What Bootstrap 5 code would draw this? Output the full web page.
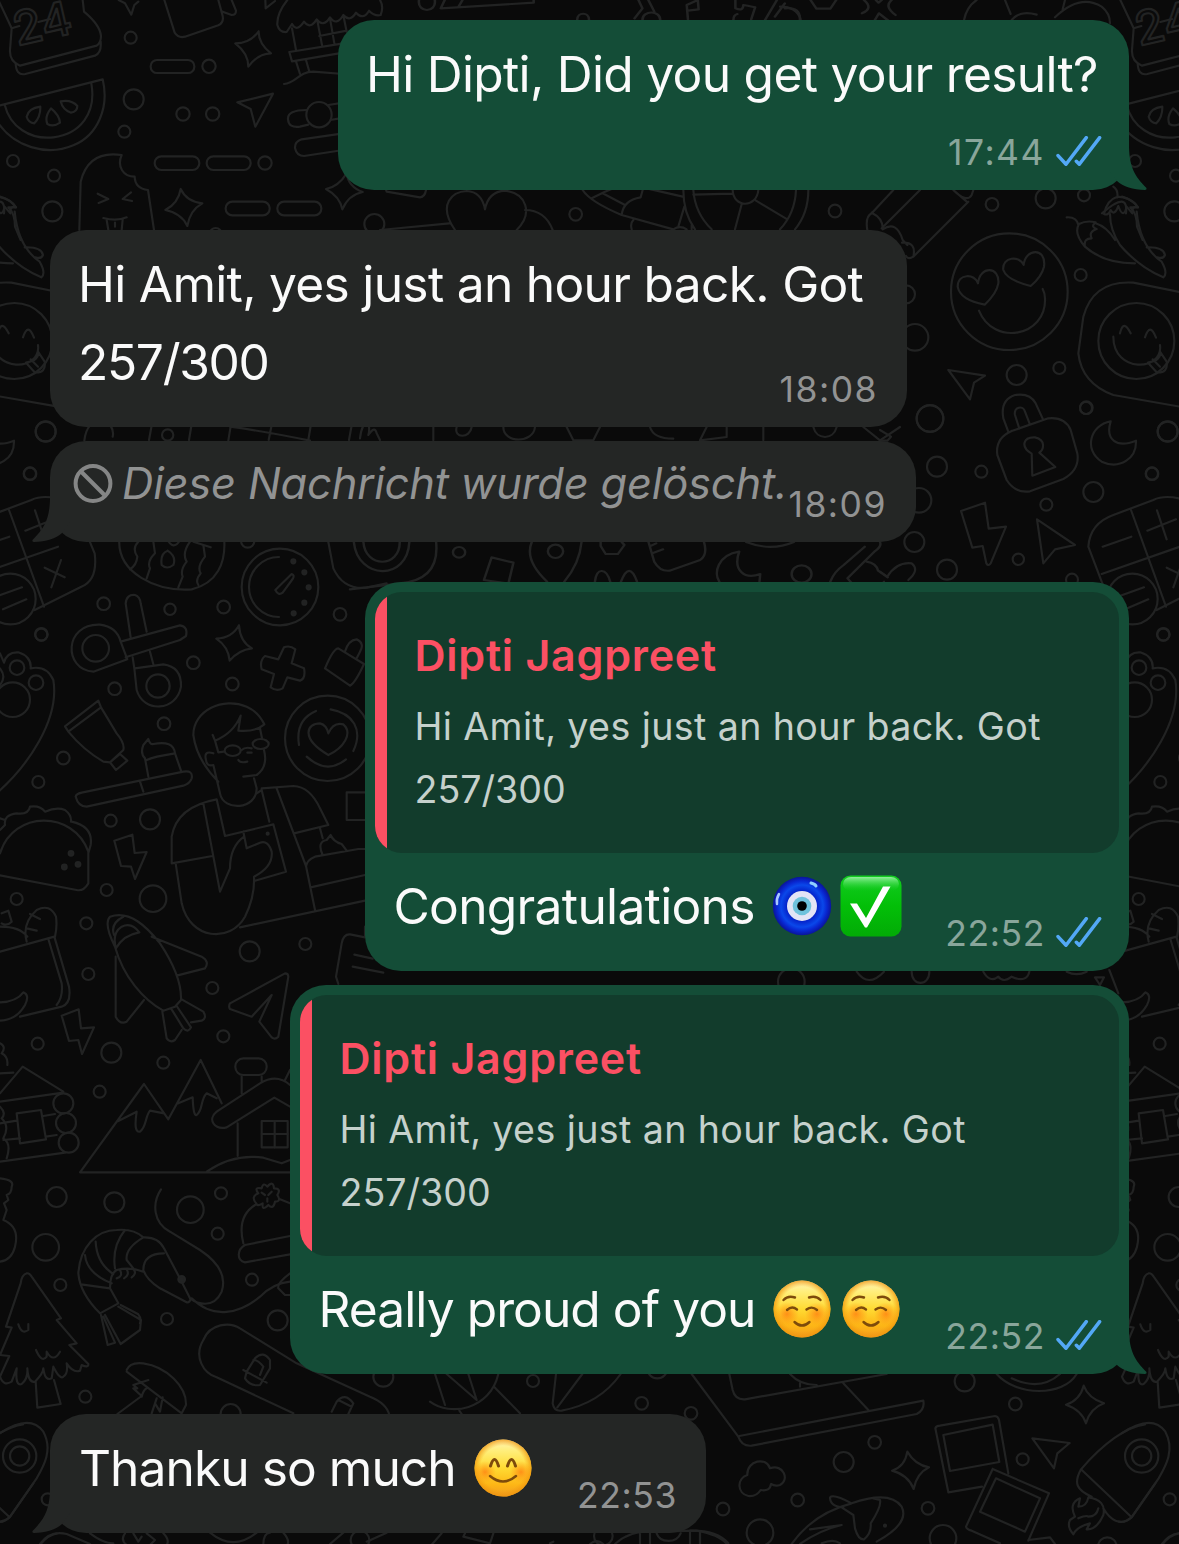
<!DOCTYPE html>
<html lang="de">
<head>
<meta charset="utf-8">
<meta name="viewport" content="width=device-width, initial-scale=1">
<title>Chat</title>
<link rel="stylesheet" href="https://cdn.jsdelivr.net/npm/bootstrap@5.3.0/dist/css/bootstrap.min.css">
<style>
body{background:#0a0a0a;font-family:Inter,"Liberation Sans",sans-serif;color:#fafafa;overflow:hidden}
.chat{width:1179px;height:1544px;padding:20px 50px 0}
.wallpaper{inset:0;width:1179px;height:1544px}
.wallpaper .ln{fill:none;stroke:#222323;stroke-width:6.5;stroke-linecap:round;stroke-linejoin:round}
.wallpaper .ln .solid{fill:#222323}
.wallpaper .ln .over{fill:#0a0a0a}
.bubble{border-radius:36px}
.bubble-out{background:#144d37}
.bubble-in{background:#242625}
.gap-lg{margin-top:40px}
.gap-sm{margin-top:14px}
.msg-text{font-size:49.7px;line-height:78px;letter-spacing:-.7px;white-space:nowrap}
.msg-text .snug{letter-spacing:-.95px}
.msg-text.figures{letter-spacing:-1.33px}
.msg-time{font-size:35.5px;line-height:36px;padding-top:2px;letter-spacing:.6px;white-space:nowrap;color:#929393}
.msg-time.airy{letter-spacing:1.5px}
.bubble-out .msg-time{color:#89a69b}
.ticks{width:46px;height:30.3px;margin:0 0 2px 11px}
.tail{width:40px;height:60px;bottom:0;right:-20px}
.tail-left{right:auto;left:-20px;transform:scaleX(-1)}
.deleted{font-size:43.5px;line-height:60px;letter-spacing:-.2px;font-style:italic;color:#929393;white-space:nowrap}
.deleted-label{margin-left:9px}
.ban{width:40px;height:40px}
.quoted{background:#123c2c;margin:10px 10px 0;height:261px;border-radius:27px;overflow:hidden}
.quoted-bar{width:12px;background:#fb5063}
.quoted-name{font-size:43px;line-height:56px;letter-spacing:.75px;font-weight:600;color:#fb5063;white-space:nowrap}
.quoted-text{font-size:37.6px;line-height:63px;margin-top:12px;letter-spacing:.4px;color:#c5d1cc;white-space:nowrap}
.quoted-text .figures{letter-spacing:0}
.quoted-body{padding:35px 0 0 27.5px}
.emoji{width:62px;height:62px}
.emoji-first{margin-left:16px}
.emoji-next{margin-left:7px}
.b1{width:791px;height:170px;padding:15px 27px 0 28px}
.b1 .time-row{margin-top:20px}
.b2{width:857px;height:197px;padding:15px 29px 0 28px}
.b2 .msg-time{margin-bottom:-7px}
.b3{width:866px;height:101px;padding:12px 29px 0 23px}
.b3 .msg-time{margin-bottom:-10px}
.b4{width:764px;height:389px}
.b5{width:839px;height:389px}
.reply-row{padding:14px 27px 0 28.5px}
.reply-row .time-row{margin-bottom:-7px}
.b6{width:656px;height:119px;padding:15px 29px 0 29px}
.b6 .msg-time{margin-bottom:-7px}
</style>
<script src="https://cdn.jsdelivr.net/npm/bootstrap@5.3.0/dist/js/bootstrap.bundle.min.js"></script>
</head>
<body>
<svg class="wallpaper position-absolute" viewBox="0 0 1179 1544" aria-hidden="true">
<defs>
<linearGradient id="faceG" x1="0" y1="0" x2="0" y2="1"><stop offset="0" stop-color="#fff3b8"/><stop offset=".2" stop-color="#ffee7a"/><stop offset=".5" stop-color="#ffdb33"/><stop offset=".8" stop-color="#fdb515"/><stop offset="1" stop-color="#f09c22"/></linearGradient>
<radialGradient id="rimG"><stop offset=".78" stop-color="#f59a10" stop-opacity="0"/><stop offset="1" stop-color="#ee930c" stop-opacity=".75"/></radialGradient>
<radialGradient id="cheekG"><stop offset="0" stop-color="#ff7a10" stop-opacity=".75"/><stop offset="1" stop-color="#ff8a10" stop-opacity="0"/></radialGradient>
<radialGradient id="blueG"><stop offset=".5" stop-color="#0420c8"/><stop offset=".72" stop-color="#0a48ea"/><stop offset=".86" stop-color="#0826d0"/><stop offset="1" stop-color="#0a149a"/></radialGradient>
<linearGradient id="okG" x1="0" y1="0" x2="0" y2="1"><stop offset="0" stop-color="#12cc20"/><stop offset=".5" stop-color="#03bf08"/><stop offset="1" stop-color="#02ab06"/></linearGradient>
<linearGradient id="okTop" x1="0" y1="0" x2="0" y2="1"><stop offset="0" stop-color="#8ff09a"/><stop offset="1" stop-color="#20d02c" stop-opacity="0"/></linearGradient>
<g id="doodles" class="ln">
<!-- top left: cake, melon, ice cream, sparkles, cafe -->
<g transform="scale(.33333)">
<path d="M-5 0L35 85L30 150Q28 185 60 197L290 137Q303 128 303 108Q300 75 252 35L248 0M47 190Q48 228 76 222L285 167Q305 158 302 125M35 85L58 78M115 66L150 57"/>
<text x="52" y="138" transform="rotate(-13 52 138)" font-family="Inter" font-weight="500" font-size="140">24</text>
<path d="M0 316L308 238C328 320 295 405 220 436C140 470 40 440 -8 365M14 314C30 380 90 420 160 412C240 402 290 340 274 250M121 320Q85 325 80 350Q85 368 103 370Q122 350 121 320M153 325Q133 350 142 372Q160 382 180 368Q178 345 153 325M182 304Q188 330 213 338Q232 335 232 318Q215 298 182 304"/>
<circle cx="392" cy="113" r="18"/><circle cx="627" cy="199" r="20"/><circle cx="401" cy="298" r="30"/><circle cx="549" cy="342" r="20"/><circle cx="638" cy="342" r="20"/><circle cx="373" cy="395" r="18"/><circle cx="39" cy="483" r="18"/><circle cx="162" cy="527" r="18"/><circle cx="157" cy="634" r="30"/><circle cx="795" cy="489" r="20"/><circle cx="1123" cy="672" r="30"/><circle cx="647" cy="702" r="18"/>
<rect x="452" y="180" width="131" height="39" rx="19"/><rect x="464" y="469" width="134" height="41" rx="20"/><rect x="620" y="469" width="132" height="41" rx="20"/><rect x="677" y="605" width="132" height="41" rx="20"/><rect x="832" y="605" width="132" height="41" rx="20"/>
<path d="M356 0L375 10L394 44L403 15L415 5M493 0L524 98Q535 115 555 110L655 76Q672 68 668 48L655 0M668 35L695 45Q708 45 708 32L695 0M796 0L797 25L825 3M862 0Q830 40 832 75Q838 98 860 96L876 72Q890 98 912 65Q930 90 950 58Q970 84 990 52Q1010 80 1030 45Q1050 68 1068 38Q1090 62 1107 32Q1125 50 1142 45Q1152 20 1140 0M876 85L888 150M952 62L966 135M990 55L1003 130M1030 45L1040 95M958 108L1040 92M868 156L1030 130M868 156L876 184L1030 158M888 184L900 222M918 180L928 215M852 252C890 248 895 215 940 215L1030 222M920 330Q862 330 864 358Q866 385 900 380L925 374M985 315L1030 308M990 360L1020 355M1030 400L905 418Q884 425 885 444Q890 468 912 468L1030 450"/>
<circle class="over" cx="957" cy="344" r="38"/>
<path d="M776 94Q775 130 813 160Q775 160 745 200Q745 160 706 130Q750 130 776 94M542 567Q560 605 607 610Q570 630 562 678Q545 640 496 630Q535 610 542 567M1040 520Q1045 560 1088 576Q1045 585 1027 628Q1020 590 978 567Q1015 560 1040 520M712 307L819 281L766 380L752 327ZM238 690L242 545Q265 450 365 465C350 500 370 530 404 530Q405 565 444 570L462 690M293 581L325 597L296 609M393 577L368 597L396 603M310 654Q350 665 380 652M320 660L325 690M368 658L365 690M345 668V680M-60 640Q20 570 12 640M0 590Q35 600 48 622L25 622Q45 640 45 680L62 720"/>
</g>
<!-- top strip -->
<g transform="translate(330 0) scale(.3955 .33333)"><path d="M225 0C220 40 270 40 265 0M290 0L280 25L515 8V0M335 0L325 20M780 0L790 25L770 55M805 0L820 35M790 60C790 30 835 30 835 60M905 58L902 15L930 0L932 28L905 32M625 60C625 35 655 35 655 60M1025 0V25Q1045 35 1045 15Q1070 20 1075 22L1065 58M1020 60Q1020 45 1030 42M1130 0L1100 60M1125 50L1150 10M1150 25Q1190 20 1188 60M1215 0L1230 26H1265L1280 0M1350 0Q1375 25 1345 40M1375 65L1388 40L1415 65M1420 0Q1400 20 1430 45M1380 0L1387 8L1395 0"/></g>
<!-- top right: pencil, chilli, loving smiley, cheeky smiley -->
<g transform="translate(780 0) scale(.33333)">
<path d="M552 60Q560 20 590 0M675 0L692 42M695 60Q720 30 770 44M825 52Q900 -20 965 20Q990 40 990 70M855 0L848 28"/>
<path d="M0 20Q50 20 62 58M262 690Q255 650 275 640L340 570M275 638Q310 655 308 688Q350 660 368 720L382 735M305 685L420 570M520 570Q560 610 575 585L580 570M565 605L400 770M520 570L560 605M366 728Q410 725 400 770Q385 780 378 768"/>
<circle cx="636" cy="613" r="19"/><circle cx="797" cy="595" r="30"/><circle cx="912" cy="586" r="18"/><circle cx="165" cy="633" r="19"/><circle cx="902" cy="825" r="18"/><circle cx="378" cy="883" r="27"/><circle cx="405" cy="1012" r="40"/><circle cx="710" cy="1125" r="30"/><circle cx="838" cy="1104" r="18"/><circle cx="918" cy="1224" r="18"/><circle cx="450" cy="1255" r="40"/>
<path d="M1000 560Q1015 570 1012 592M1012 590Q980 600 972 642Q985 648 992 630Q1003 650 1015 618Q1030 660 1040 620L1057 640Q1055 615 1074 622Q1050 590 1012 590M990 642Q990 690 1020 735Q1075 800 1150 832Q1165 820 1145 785Q1080 740 1070 635M860 652Q890 650 895 675M897 672Q880 700 915 740Q910 715 935 715Q925 695 950 687Q930 680 947 667Q920 660 897 672M915 740Q970 790 1065 790M947 670Q980 680 1005 720M1100 742Q1150 740 1155 765Q1150 778 1132 772"/>
<circle cx="688" cy="875" r="175"/><circle cx="1069" cy="1023" r="114"/>
<path d="M614 914Q540 900 533 860C533 820 585 820 594 850C600 795 660 800 655 850Q650 880 614 914ZM752 858Q680 840 670 810C665 770 720 765 731 795C735 745 800 740 792 800Q785 830 752 858ZM597 932C640 1040 800 1010 795 895Q795 880 788 867M1200 876L1060 848Q940 840 910 950L895 1060Q905 1150 1000 1185L1200 1220M1020 1000Q1030 955 1052 1000M1095 1012Q1110 965 1128 1013M1000 1010C1000 1120 1150 1115 1140 1035M1104 1088Q1145 1080 1140 1055L1160 1085Q1165 1120 1130 1117ZM1118 1078L1140 1100M505 1110L615 1127L582 1148L570 1198Z"/>
</g>
<!-- padlock, moon, lightning, calculator -->
<g transform="translate(880 380) scale(.33333)">
<circle cx="150" cy="116" r="40"/><circle cx="171" cy="260" r="30"/><circle cx="304" cy="275" r="18"/><circle cx="117" cy="361" r="37"/><circle cx="103" cy="486" r="30"/><circle cx="201" cy="569" r="30"/><circle cx="499" cy="374" r="18"/><circle cx="415" cy="538" r="17"/><circle cx="619" cy="83" r="19"/><circle cx="863" cy="155" r="30"/><circle cx="816" cy="281" r="19"/><circle cx="640" cy="336" r="30"/><circle cx="576" cy="599" r="18"/><circle cx="850" cy="764" r="18"/>
<path d="M386 158L370 115Q360 60 405 45Q450 38 467 70L488 116M418 146L405 105C400 80 430 75 435 95L450 134M395 153L505 115Q555 110 572 150L592 220Q600 270 550 297L450 334Q405 340 380 300L352 225Q345 175 395 153M455 221C420 200 430 170 465 172C500 180 490 210 478 218L526 261L457 287ZM692 124C630 135 610 210 665 245C720 270 770 235 768 182C710 205 675 180 692 124M243 393L315 368L326 446L378 440L332 550Q325 560 319 550L308 498L277 503ZM471 418L585 495L525 508L490 550Z"/>
<path d="M0 150L33 170L22 182H0M0 575L22 590Q50 545 95 550Q120 570 85 600M0 620L12 605"/>
<path d="M897 355Q850 345 820 360L700 405Q630 430 625 500L665 605L700 690M665 582L900 500M753 390L858 680M668 500L754 470M831 391L860 478M802 452L888 418M860 563L920 592M909 540L880 622M900 355Q950 370 960 400L1010 520Q1020 600 970 620L830 690"/>
<circle class="over" cx="757" cy="657" r="76"/><path d="M700 655L792 622M735 688L805 658"/>
</g>
<!-- left middle: stopwatch, scissors, paw, toothpaste, selfie -->
<g transform="translate(0 420) scale(.33333)">
<circle cx="137" cy="34" r="30"/><circle cx="90" cy="161" r="18"/><circle cx="311" cy="551" r="19"/><circle cx="510" cy="568" r="17"/><circle cx="671" cy="561" r="19"/><circle cx="124" cy="643" r="19"/><circle cx="580" cy="728" r="19"/><circle cx="344" cy="806" r="19"/><circle cx="697" cy="792" r="19"/><circle cx="492" cy="911" r="19"/><circle cx="190" cy="1014" r="19"/><circle cx="115" cy="1086" r="18"/><circle cx="1020" cy="583" r="19"/><circle cx="743" cy="363" r="20"/><circle cx="503" cy="45" r="17"/>
<circle cx="840" cy="501" r="115"/><path d="M837 411A90 90 0 0 0 837 591M826 510L875 462Q885 465 878 477L848 518Q835 528 826 510"/>
<g class="solid"><circle class="solid" cx="880" cy="424" r="6"/><circle class="solid" cx="913" cy="457" r="6"/><circle class="solid" cx="926" cy="502" r="6"/><circle class="solid" cx="913" cy="548" r="6"/><circle class="solid" cx="881" cy="580" r="6"/></g>
<path d="M358 355C350 460 470 515 575 508C650 490 680 430 672 350M415 365Q395 385 412 410Q410 435 390 448M460 365L465 400Q440 425 450 445L440 475M570 365Q545 400 560 425Q540 450 548 470L535 502M610 375L615 410Q590 440 602 460Q585 480 595 495M580 365L632 382M503 392Q480 400 485 435Q500 450 520 435Q530 410 503 392M500 355Q520 395 540 360M985 366L1000 445Q1030 510 1100 503L1160 490"/>
<path d="M253 62Q260 0 310 0Q345 20 338 50M458 0L447 60M577 0L567 60M695 0L685 62M818 0L806 60M935 0L925 60M1058 0L1047 60M690 20Q800 35 930 62M1080 55Q1085 10 1105 5Q1110 30 1105 45Q1125 15 1130 40L1140 60"/>
<circle cx="287" cy="685" r="40"/><circle cx="474" cy="798" r="35"/>
<path d="M392 652L377 550Q380 522 405 525Q420 530 422 550L440 635M362 665L540 616Q565 620 558 648L540 660L377 712M362 665Q350 620 300 614C190 610 190 750 280 755L382 718ZM398 712L403 745L410 810C430 880 530 875 543 800Q545 740 490 733L405 745M450 695L460 733"/>
<path d="M717 616Q720 665 756 685Q715 690 689 722Q685 680 649 656Q695 655 717 616M852 682Q870 675 886 688L875 730L912 745Q918 775 900 782L862 772L848 805Q830 815 812 802L822 762L785 748Q778 722 795 708L835 718ZM1015 685Q1000 685 975 745L1050 797Q1065 790 1092 732ZM1035 695Q1045 660 1070 658Q1095 670 1080 695L1070 715"/>
<path d="M0 700L12 728Q20 695 55 697Q95 710 92 745Q140 735 160 780C180 900 80 1040 -5 1115M0 795Q20 770 0 745"/><circle cx="51" cy="743" r="22"/><circle cx="108" cy="788" r="22"/><circle cx="38" cy="839" r="52"/>
<path d="M195 919L295 842L303 862L205 935ZM205 935Q250 990 310 1025L330 1027L370 990Q375 970 350 940L303 862M330 1027L360 1002L382 1022L348 1050ZM227 1130Q228 1122 245 1118L550 1055Q580 1050 575 1075Q570 1090 550 1097L260 1160Q235 1160 227 1130M420 1085L430 1115M445 1070L435 1015Q420 1000 430 975L445 957Q450 975 460 972Q520 960 525 1000Q460 1010 440 1020M525 1000L543 1052"/>
<circle cx="983" cy="955" r="128"/><path d="M985 1005C900 955 920 910 960 910Q980 915 985 940Q1000 905 1030 913C1060 940 1030 985 985 1005M897 975Q885 900 948 873M992 868C1060 880 1090 930 1060 993M920 1010Q980 1065 1038 1018"/>
<path d="M580 945C580 870 670 830 740 860Q775 875 793 913Q765 937 715 932L722 887Q700 940 645 962L638 945M780 925L786 955M792 990Q805 1040 770 1065L730 1070M640 1000Q610 990 618 1020Q620 1040 640 1035L660 1120M580 945Q590 1020 655 1085M645 962L655 997L672 995M725 990Q735 980 755 985M715 1020Q720 1030 742 1025M660 1120C670 1175 770 1170 770 1105L762 1075M742 998H755"/><ellipse cx="698" cy="992" rx="24" ry="16"/><ellipse cx="782" cy="972" rx="24" ry="15"/>
</g>
<!-- selfie body, taco, bag, plane, mountains, house -->
<g transform="translate(0 790) scale(.33333)">
<circle cx="332" cy="92" r="18"/><circle cx="450" cy="88" r="30"/><circle cx="320" cy="300" r="18"/><circle cx="459" cy="326" r="40"/><circle cx="50" cy="327" r="18"/><circle cx="259" cy="400" r="18"/><circle cx="749" cy="484" r="30"/><circle cx="916" cy="462" r="18"/><circle cx="265" cy="552" r="18"/><circle cx="637" cy="594" r="18"/><circle cx="670" cy="739" r="18"/><circle cx="113" cy="761" r="18"/><circle cx="334" cy="788" r="30"/><circle cx="490" cy="818" r="18"/><circle cx="299" cy="905" r="18"/>
<path d="M650 28Q530 50 515 140V220L637 198M610 40L660 305L690 235Q690 170 732 140M650 28L675 138L820 103L858 245L765 272M770 10L785 0L808 95M785 -5L880 -12Q930 -10 960 55L985 105L882 130M830 -5L918 228L945 360M527 220L545 340C570 450 690 460 735 380Q765 320 762 260Q820 230 815 185Q805 150 780 158L740 175L730 125M720 412L1095 332M932 292L1095 255M918 230Q920 210 945 200L1075 177H1095M960 115L968 145M968 195Q950 155 980 150L992 135Q1000 155 1025 162L1040 182M1095 7H1040V90H1095"/><circle cx="803" cy="131" r="3"/>
<path d="M0 190C40 60 220 60 265 185V280Q250 305 230 300L-5 255M15 105Q10 75 50 70Q85 75 90 50Q120 45 135 65Q170 50 195 60Q215 75 213 95M215 95Q280 110 272 165L265 190M0 85L15 90M0 120L15 105M343 152L397 134L404 189L440 186L405 267L393 230L363 228Z"/><circle class="solid" cx="213" cy="190" r="7"/><circle class="solid" cx="193" cy="231" r="7"/><circle class="solid" cx="234" cy="223" r="7"/>
<path d="M0 485L163 440L207 590Q215 640 185 650L60 680M145 447L185 580Q190 620 170 645M80 455Q65 400 110 360Q150 340 168 380Q172 410 165 440M0 410Q60 410 82 440M90 372L120 387M80 415L110 422M5 370L25 362L35 395Q20 410 5 400M0 637Q50 635 70 607Q90 615 75 645Q50 690 0 692"/>
<path d="M345 470Q310 400 330 380C390 360 440 410 480 460C520 520 545 580 543 630L525 650L490 662C430 630 370 560 345 470M342 435Q330 400 370 380M348 475Q335 430 365 410Q395 395 418 427Q370 435 348 475M455 440L605 500Q630 515 615 535L530 557M347 500V680Q360 705 380 695L432 630M487 665L500 745Q510 760 525 750L545 720M545 628L610 665Q622 685 605 692L573 697M513 655L550 715Q565 730 573 712L530 648"/>
<path d="M185 677L236 658L243 715L282 712L246 792L235 750L207 753ZM690 640L855 550Q865 550 865 560L835 740Q825 750 815 742L778 695L815 615L755 680L690 657Q685 650 690 640"/>
<path d="M0 910L68 830L190 905M0 935L190 908M0 850L40 848M0 760Q20 770 5 790Q25 800 22 825M0 1115L195 1088M50 970L123 960L138 1048L60 1060ZM0 1000L50 992M130 978L165 972M10 1050L60 1045M138 1040L170 1035"/><circle cx="190" cy="940" r="30"/><circle cx="198" cy="999" r="30"/><circle cx="206" cy="1058" r="30"/><path d="M0 950Q20 970 5 985Q30 1010 10 1045Q35 1060 20 1105"/>
<path d="M870 1147H240L432 882L505 988L602 810L665 940M355 993L410 965Q400 1030 420 1025C440 1010 435 980 450 962L492 970M535 940L578 922Q580 980 590 975C610 960 600 930 620 910L650 925M650 965L780 880Q830 850 870 885M650 965C620 990 645 1020 680 1012L823 923L870 950M725 910V860M785 860V875M713 1000V1098M620 1145Q700 1090 790 1103L845 1120L870 1110M855 870L870 840"/><rect x="706" y="805" width="94" height="50" rx="24"/><rect x="785" y="993" width="78" height="79"/><path d="M824 993V1072M785 1032H863"/>
<path d="M1095 442L1050 433Q1030 432 1025 460L1008 560L1015 582M1095 440V410M1063 494L1118 506M1058 530L1150 548"/>
</g>
<!-- bottom left: shrimp, tree, cap, snowboard, mushroom, rocket -->
<g transform="translate(0 1160) scale(.33333)">
<circle cx="170" cy="111" r="30"/><circle cx="343" cy="127" r="30"/><circle cx="137" cy="262" r="40"/><circle cx="571" cy="149" r="40"/><circle cx="663" cy="100" r="18"/><circle cx="653" cy="221" r="18"/><circle cx="181" cy="375" r="18"/><circle cx="756" cy="359" r="18"/><circle cx="501" cy="477" r="18"/><circle cx="833" cy="481" r="30"/><circle cx="256" cy="710" r="18"/><circle cx="692" cy="762" r="30"/><circle cx="1150" cy="650" r="30"/>
<path d="M483 88C455 130 460 190 510 215L600 270C660 310 680 350 665 395C640 450 590 430 570 415L545 365L492 265Q475 230 430 232Q400 205 350 210C290 210 240 260 235 340Q240 400 300 460L355 430L330 385Q330 340 350 330Q390 320 430 335M492 280Q430 280 430 330Q440 360 480 385L560 427Q570 428 572 415M430 232Q375 265 380 300L400 325M375 210Q335 260 345 325M287 245Q290 310 340 342M255 285Q260 340 335 370M243 373L330 385M303 465L323 555L345 548L310 470M315 465L362 552L420 510L423 480L355 440M362 435L415 463Q425 475 420 490M350 355Q370 350 360 330M372 355Q390 345 380 328M395 352Q412 340 400 328M575 415C640 480 720 460 780 410Q820 370 870 365"/><circle class="solid" cx="545" cy="358" r="10"/>
<path d="M80 340Q65 345 62 370L18 500L35 503L0 585L28 588L0 650Q10 680 35 665L50 625Q45 680 65 672Q85 655 82 625Q85 670 105 665Q130 640 130 625Q135 665 155 655L160 620Q180 660 190 650Q205 640 200 610Q220 640 240 632L245 615Q265 625 265 612L208 555L230 550L170 480L183 475L95 350Q88 338 80 340M55 493Q65 525 85 510V492M108 570Q125 610 140 590V575Q160 610 180 575M107 665L112 743L182 732L162 660"/>
<path d="M0 55Q45 60 35 80Q35 100 20 105L25 120L12 130L20 150L10 180Q60 200 45 260Q35 300 0 305M730 250Q710 170 765 135M840 118L870 130M735 255L870 228M735 255C710 270 710 300 735 307L870 283M770 132Q750 110 775 100Q760 80 785 85Q790 65 802 80Q820 60 822 85Q845 85 832 105Q845 125 825 125Q820 150 805 135Q785 155 788 130Q770 140 770 132M795 105L785 98M805 105L815 95M802 115V125"/>
<path d="M870 340Q830 370 835 385L855 405H870M610 540C630 490 690 485 720 505L890 610L1110 710Q1160 730 1168 765M610 540C580 590 610 640 650 652L880 760M740 635L765 595Q790 570 810 600V625L780 675Q750 680 735 655ZM730 630L800 668M760 600Q775 600 790 620L780 645M995 755L1010 725Q1035 695 1060 730L1045 762M1015 720L1055 740M352 762L425 708L400 685H412L400 675L445 660M380 630Q390 605 430 610C500 620 560 680 558 735L545 760L380 635M425 710Q430 690 440 685M455 760L465 730L480 755L488 712M465 730L470 715"/>
<path d="M-1 820Q90 760 130 815C160 870 130 920 110 955L30 1070Q10 1090 -10 1085"/><circle cx="143" cy="1018" r="18"/>
<path d="M120 1152Q150 1110 200 1122L270 1152M270 1120Q310 1150 340 1150M375 1120Q360 1140 380 1155M400 1120L415 1145L425 1130M440 1120L465 1140L450 1155M490 1120Q510 1140 500 1155M630 1118Q700 1175 770 1118M790 1155Q790 1120 810 1118M850 1118Q870 1140 862 1155M990 1152L1030 1118M1100 1145L1160 1118"/><circle cx="1080" cy="1140" r="28"/>
</g>
<!-- bottom middle -->
<g transform="translate(430 1360) scale(.33333)"><circle cx="309" cy="63" r="18"/><circle cx="635" cy="130" r="19"/><circle cx="783" cy="160" r="19"/><circle cx="682" cy="25" r="30"/>
<path d="M0 125C60 170 180 150 205 42M15 42L45 135M50 42L140 120M115 42L140 120M192 80L270 160M88 152L95 162M378 42L368 130Q372 155 395 152Q510 130 572 42M457 42L382 142M0 560L35 520M105 520L100 530L180 550L190 520M360 550L370 545"/><circle cx="520" cy="528" r="28"/><path d="M555 552Q600 510 670 515L800 512Q870 525 890 552M630 520V552M660 518V552M780 515V552M810 515V552M680 520C690 550 740 550 752 520M480 552Q500 535 520 552"/></g>
<!-- bottom right: laptop, polaroids, whale, rocket -->
<g transform="translate(690 1260) scale(.33333)">
<circle cx="824" cy="364" r="30"/><circle cx="976" cy="432" r="19"/><circle cx="554" cy="547" r="19"/><circle cx="461" cy="606" r="30"/><circle cx="998" cy="598" r="18"/><circle cx="99" cy="747" r="19"/><circle cx="323" cy="720" r="19"/><circle cx="714" cy="745" r="19"/><circle cx="210" cy="818" r="40"/><circle cx="759" cy="835" r="40"/><circle cx="1252" cy="860" r="28"/><circle cx="1355" cy="588" r="50"/><circle cx="1355" cy="588" r="29"/><circle cx="585" cy="797" r="3"/>
<path d="M5 342L145 530Q155 560 185 557L680 462Q705 450 700 422L148 528M118 342L128 390Q135 420 165 418L590 342M300 342Q330 375 380 375M330 370V380M460 370L535 450M920 342C980 410 1120 410 1160 342M965 355Q1050 395 1110 342"/>
<path d="M175 708C140 700 140 655 172 645C170 600 230 590 240 625C280 610 300 660 270 675Q255 680 243 672Q240 695 212 690Q200 710 175 708M652 575Q675 615 717 622Q680 640 671 687Q655 645 606 632Q645 620 652 575M1181 377Q1195 415 1242 430Q1200 445 1188 490Q1175 450 1128 434Q1170 420 1181 377M1027 535L1139 549L1102 580L1092 625Z"/>
<path d="M876 680L775 697L736 505Q738 498 750 497L915 468Q925 470 927 480L955 640M760 525L908 494L928 606L780 633ZM908 627L1077 700L1015 842M908 627L828 800Q830 808 845 812L930 850M918 655L1050 715L1005 815L870 755ZM1015 840L1080 832L1095 852"/>
<path d="M305 852Q370 760 485 730Q600 690 635 740Q660 790 560 845M485 730Q430 700 420 712Q420 740 460 742M455 742L490 765L495 805Q505 840 522 838Q545 820 542 790Q575 740 570 720L550 715M360 808L455 795Q390 810 330 852M395 850Q430 835 450 850M0 812Q80 810 115 850M30 820V850"/>
<path d="M1173 628C1240 550 1310 500 1365 493M1173 628L1325 772M1173 628C1150 670 1160 690 1205 710M1240 745C1260 780 1290 800 1325 772L1396 670M1195 712Q1250 720 1240 765Q1220 810 1190 808L1200 790Q1160 800 1150 823Q1130 800 1140 780L1155 770Q1135 730 1170 715L1165 740Q1190 740 1195 712M1165 775Q1190 765 1195 770Q1220 770 1225 745M1420 850Q1440 825 1467 820"/>
</g>
<!-- between the bubbles -->
<g transform="translate(400 160) scale(.33333)"><path d="M-60 40L-40 95L60 112Q75 110 78 90M-60 210L148 190M165 210C110 130 160 95 200 93Q245 95 255 148Q265 95 315 92C380 100 400 160 350 210M375 150Q435 150 458 210M548 90Q570 125 665 165L820 208M575 115L615 95L700 60M608 100L675 135M665 165Q670 120 722 112L728 90M740 85L848 110M700 180Q690 190 695 208M835 200L853 140M850 90Q850 160 885 208M880 90Q885 160 935 208M1225 90Q1225 160 1185 208M1188 90Q1185 160 1140 208M880 104L998 101M1068 122L1162 178M1025 133L1005 208M1075 90C1070 145 1000 145 998 90M820 208Q840 195 860 208M875 195V208"/><circle cx="527" cy="163" r="19"/></g>
<g transform="translate(350 530) scale(.3827 .33333)"><path d="M10 36C20 150 150 155 155 36M35 36C40 115 130 115 130 36M225 36Q235 150 130 160L0 178M370 82L427 98L415 155M370 82L350 150L410 160M475 36Q455 90 515 155M605 36Q600 100 560 155M655 36V48L668 72H700L717 45L710 36M780 36L795 95Q810 125 835 122L915 90Q935 75 925 36M785 48L800 40M790 70L818 58M640 155C645 110 670 115 680 155M708 155Q730 90 750 155M1017 65C960 75 950 130 965 155M1017 65C1000 120 1030 150 1072 132L1070 155M1035 36Q1100 65 1160 36M1255 155Q1265 125 1290 105L1345 50M1385 36Q1390 50 1370 65L1300 145L1310 158M1350 95Q1375 100 1380 122L1405 142"/><circle cx="285" cy="67" r="16"/><circle cx="537" cy="64" r="20"/><circle cx="1180" cy="132" r="26"/></g>
<g transform="translate(690 860) scale(.33333)"><circle cx="304" cy="365" r="40"/><path d="M500 335Q535 385 582 335M665 335C665 380 718 380 718 335M880 335Q900 370 925 350Q940 370 965 350Q1010 370 1018 335M1130 335Q1160 350 1190 335M1215 352H1242L1230 375ZM1258 330L1285 400"/></g>
<g transform="translate(420 427) scale(.33333)"><path d="M40 0V40M110 0C100 35 150 35 155 0M250 0C250 50 340 50 345 0M440 0L460 40H520L540 0M690 0Q700 35 760 35M860 0L840 40L920 30V0M1030 0V40M1180 0C1190 40 1240 40 1250 0M1330 0L1380 40L1440 0"/></g>
</g></defs>
<use href="#doodles"/><use href="#doodles" x="1122"/><use href="#doodles" x="-1122"/>
</svg>

<main class="chat position-relative d-flex flex-column">
<div class="bubble bubble-out b1 position-relative align-self-end d-flex flex-column">
 <div class="msg-text">Hi Dipti, Did you get your result?</div>
 <div class="time-row d-flex justify-content-end align-items-center"><span class="msg-time airy">17:44</span><svg class="ticks" viewBox="827 408 138 91" fill="none" stroke="#53a8f6" stroke-width="10.5" stroke-linecap="round" stroke-linejoin="round"><path d="M833 467L857 493L918 413M888 484L897 493L958 413"/></svg></div>
 <svg class="tail position-absolute" viewBox="0 0 40 60" fill="#144d37"><path d="M0 0H20V17C20.5 37 25.5 46 37.5 58Q38 60 36 60C24 60 14 56.5 8 51L0 40Z"/></svg>
</div>
<div class="bubble bubble-in b2 gap-lg">
 <div class="msg-text">Hi Amit, yes just an hour back. Got</div>
 <div class="d-flex justify-content-between align-items-end"><span class="msg-text figures">257/300</span><span class="msg-time airy">18:08</span></div>
</div>
<div class="bubble bubble-in b3 gap-sm position-relative">
 <div class="d-flex align-items-end"><span class="deleted d-flex align-items-center"><svg class="ban" viewBox="0 0 40 40" fill="none" stroke="#858686" stroke-width="4"><circle cx="20" cy="20.500" r="17.400"/><path d="M8 8.500L32 32.500"/></svg><span class="deleted-label">Diese Nachricht wurde gelöscht.</span></span><span class="msg-time airy ms-auto">18:09</span></div>
 <svg class="tail tail-left position-absolute" viewBox="0 0 40 60" fill="#242625"><path d="M0 0H20V17C20.5 37 25.5 46 37.5 58Q38 60 36 60C24 60 14 56.5 8 51L0 40Z"/></svg>
</div>
<div class="bubble bubble-out b4 gap-lg align-self-end d-flex flex-column">
 <div class="quoted d-flex"><div class="quoted-bar"></div><div class="quoted-body"><div class="quoted-name">Dipti Jagpreet</div><div class="quoted-text">Hi Amit, yes just an hour back. Got<br><span class="figures">257/300</span></div></div></div>
 <div class="reply-row d-flex justify-content-between align-items-end"><div class="msg-text d-flex align-items-center"><span>Congratulations</span>
  <svg class="emoji emoji-first" viewBox="0 0 62 62"><circle cx="31" cy="31" r="29.2" fill="url(#blueG)"/><path d="M8 19Q5 24 6 29" stroke="#a8c8ff" stroke-width="2.5" stroke-linecap="round" fill="none"/><path d="M40 8Q44 9 45 11" stroke="#8fd0ff" stroke-width="3" stroke-linecap="round" fill="none"/><circle cx="31" cy="31" r="15" fill="#e2e4f5"/><circle cx="31" cy="31" r="9.3" fill="#6fc2dc"/><circle cx="31" cy="31" r="4.8" fill="#000"/></svg>
  <svg class="emoji emoji-next" viewBox="0 0 62 62"><rect x=".5" y=".5" width="61" height="61" rx="10" fill="url(#okG)"/><rect x="3" y="2" width="56" height="14" rx="8" fill="url(#okTop)"/><path d="M10 28.5H17L26 43L43 11.5H50.5L27 52.5H25Z" fill="#fff"/></svg></div>
 <div class="time-row d-flex align-items-center"><span class="msg-time">22:52</span><svg class="ticks" viewBox="827 408 138 91" fill="none" stroke="#53a8f6" stroke-width="10.5" stroke-linecap="round" stroke-linejoin="round"><path d="M833 467L857 493L918 413M888 484L897 493L958 413"/></svg></div></div>
</div>
<div class="bubble bubble-out b5 gap-sm align-self-end position-relative d-flex flex-column">
 <div class="quoted d-flex"><div class="quoted-bar"></div><div class="quoted-body"><div class="quoted-name">Dipti Jagpreet</div><div class="quoted-text">Hi Amit, yes just an hour back. Got<br><span class="figures">257/300</span></div></div></div>
 <div class="reply-row d-flex justify-content-between align-items-end"><div class="msg-text d-flex align-items-center"><span class="snug">Really proud of you</span>
  <svg class="emoji emoji-first" viewBox="0 0 62 62"><g id="calm"><circle cx="31" cy="31" r="28.5" fill="url(#faceG)"/><circle cx="31" cy="31" r="28.5" fill="url(#rimG)"/><circle cx="16" cy="36" r="12" fill="url(#cheekG)"/><circle cx="46" cy="36" r="12" fill="url(#cheekG)"/><g fill="none" stroke="#7d4b0b" stroke-width="2.4" stroke-linecap="round"><path d="M12.500 22Q17 17 24 19.500M38 19.500Q45 17 49.500 22M16 32Q21 27.500 26 31.500M35.500 31.500Q41 27.500 46 32M23.500 44Q31 51 38.500 44"/></g></g></svg>
  <svg class="emoji emoji-next" viewBox="0 0 62 62"><use href="#calm"/></svg></div>
 <div class="time-row d-flex align-items-center"><span class="msg-time">22:52</span><svg class="ticks" viewBox="827 408 138 91" fill="none" stroke="#53a8f6" stroke-width="10.5" stroke-linecap="round" stroke-linejoin="round"><path d="M833 467L857 493L918 413M888 484L897 493L958 413"/></svg></div></div>
 <svg class="tail position-absolute" viewBox="0 0 40 60" fill="#144d37"><path d="M0 0H20V17C20.5 37 25.5 46 37.5 58Q38 60 36 60C24 60 14 56.5 8 51L0 40Z"/></svg>
</div>
<div class="bubble bubble-in b6 gap-lg position-relative">
 <div class="d-flex justify-content-between align-items-end"><div class="msg-text d-flex align-items-center"><span class="snug">Thanku so much</span>
  <svg class="emoji emoji-first" viewBox="0 0 62 62"><circle cx="31" cy="31" r="28.5" fill="url(#faceG)"/><circle cx="31" cy="31" r="28.5" fill="url(#rimG)"/><circle cx="13" cy="35" r="11" fill="url(#cheekG)"/><circle cx="49" cy="35" r="11" fill="url(#cheekG)"/><g fill="none" stroke="#7d4b0b" stroke-width="3" stroke-linecap="round"><path d="M18.500 29Q22.500 16 26.500 29M35.500 29Q39.500 16 43.500 29"/><path d="M18 39Q31 50 44 39" stroke-width="2.5"/></g></svg></div><span class="msg-time">22:53</span></div>
 <svg class="tail tail-left position-absolute" viewBox="0 0 40 60" fill="#242625"><path d="M0 0H20V17C20.5 37 25.5 46 37.5 58Q38 60 36 60C24 60 14 56.5 8 51L0 40Z"/></svg>
</div>
</main>
</body>
</html>
